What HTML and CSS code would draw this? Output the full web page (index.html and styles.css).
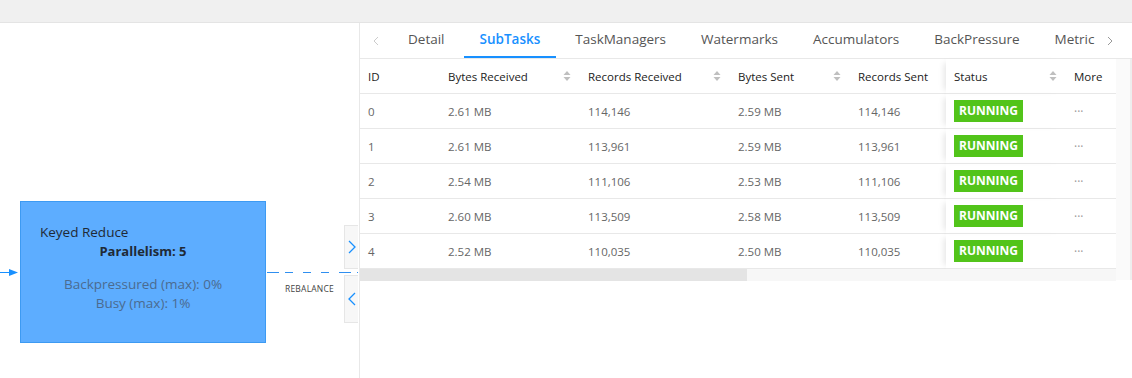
FILE: index.html
```html
<!DOCTYPE html>
<html lang="en">
<head>
    <meta charset="UTF-8">
    <title>Job Vertex - SubTasks</title>
    <link rel="stylesheet" href="styles.css">
</head>
<body>
    <div class="topbar"></div>

    <div class="main">
        <!-- Grafo do job -->
        <div class="graph">
            <svg class="edges" width="359" height="355" viewBox="0 0 359 355">
                <line x1="0" y1="249.5" x2="11" y2="249.5" stroke="#1890ff" stroke-width="1"/>
                <path d="M9 246 L18 249.5 L9 253 Z" fill="#1890ff"/>
                <line x1="267" y1="249.5" x2="358" y2="249.5" stroke="#2f8ff0" stroke-width="1" stroke-dasharray="12 6 8 10 8 10 8 10 12 6"/>
            </svg>

            <div class="node">
                <div class="node-name">Keyed Reduce</div>
                <div class="node-parallelism">Parallelism: 5</div>
                <div class="node-metrics">
                    <div>Backpressured (max): 0%</div>
                    <div>Busy (max): 1%</div>
                </div>
            </div>

            <span class="edge-label">REBALANCE</span>

            <div class="toggle toggle-expand">
                <svg width="8" height="14" viewBox="0 0 8 14"><path d="M1 1 L7 7 L1 13" fill="none" stroke="#1890ff" stroke-width="1.3"/></svg>
            </div>
            <div class="toggle toggle-collapse">
                <svg width="8" height="14" viewBox="0 0 8 14"><path d="M7 1 L1 7 L7 13" fill="none" stroke="#1890ff" stroke-width="1.3"/></svg>
            </div>
        </div>

        <!-- Painel de detalhes -->
        <div class="drawer">
            <div class="tabs-bar">
                <span class="tab-arrow tab-arrow-off">
                    <svg width="6" height="10" viewBox="0 0 6 10"><path d="M5 1 L1 5 L5 9" fill="none" stroke="currentColor" stroke-width="1"/></svg>
                </span>
                <div class="tab-list">
                    <div class="tab">Detail</div>
                    <div class="tab active">SubTasks</div>
                    <div class="tab">TaskManagers</div>
                    <div class="tab">Watermarks</div>
                    <div class="tab">Accumulators</div>
                    <div class="tab">BackPressure</div>
                    <div class="tab">Metric</div>
                </div>
                <span class="tab-arrow tab-arrow-next">
                    <svg width="6" height="10" viewBox="0 0 6 10"><path d="M1 1 L5 5 L1 9" fill="none" stroke="currentColor" stroke-width="1"/></svg>
                </span>
            </div>

            <div class="table-area">
                <div class="table-wrap">
                    <table class="subtasks">
                        <colgroup>
                            <col style="width: 80px">
                            <col style="width: 140px">
                            <col style="width: 150px">
                            <col style="width: 120px">
                            <col style="width: 96px">
                            <col style="width: 120px">
                            <col style="width: 50px">
                        </colgroup>
                        <thead>
                            <tr>
                                <th>ID</th>
                                <th><div class="th-inner">Bytes Received <span class="sorter"></span></div></th>
                                <th><div class="th-inner">Records Received <span class="sorter"></span></div></th>
                                <th><div class="th-inner">Bytes Sent <span class="sorter"></span></div></th>
                                <th>Records Sent</th>
                                <th class="fixed"><div class="th-inner">Status <span class="sorter"></span></div></th>
                                <th>More</th>
                            </tr>
                        </thead>
                        <tbody>
                            <tr>
                                <td>0</td><td>2.61 MB</td><td>114,146</td><td>2.59 MB</td><td>114,146</td>
                                <td class="fixed"><span class="tag">RUNNING</span></td><td class="more">···</td>
                            </tr>
                            <tr>
                                <td>1</td><td>2.61 MB</td><td>113,961</td><td>2.59 MB</td><td>113,961</td>
                                <td class="fixed"><span class="tag">RUNNING</span></td><td class="more">···</td>
                            </tr>
                            <tr>
                                <td>2</td><td>2.54 MB</td><td>111,106</td><td>2.53 MB</td><td>111,106</td>
                                <td class="fixed"><span class="tag">RUNNING</span></td><td class="more">···</td>
                            </tr>
                            <tr>
                                <td>3</td><td>2.60 MB</td><td>113,509</td><td>2.58 MB</td><td>113,509</td>
                                <td class="fixed"><span class="tag">RUNNING</span></td><td class="more">···</td>
                            </tr>
                            <tr>
                                <td>4</td><td>2.52 MB</td><td>110,035</td><td>2.50 MB</td><td>110,035</td>
                                <td class="fixed"><span class="tag">RUNNING</span></td><td class="more">···</td>
                            </tr>
                        </tbody>
                    </table>
                    <div class="hscroll"><div class="hscroll-thumb"></div></div>
                </div>
                <div class="vgutter"></div>
            </div>
        </div>
    </div>

    <script>
        // Ícones de ordenação (iguais em todas as colunas)
        document.querySelectorAll('.sorter').forEach(function (el) {
            el.innerHTML = '<svg width="8" height="12" viewBox="0 0 8 12">' +
                '<path d="M4 1 L7.5 5 L0.5 5 Z" fill="#bfbfbf"/>' +
                '<path d="M4 11 L7.5 7 L0.5 7 Z" fill="#bfbfbf"/></svg>';
        });
    </script>
</body>
</html>
```

FILE: styles.css
```css
body {
    margin: 0;
    font-family: "Open Sans", "Noto Sans", sans-serif;
    background: #fff;
    color: #333;
    overflow: hidden;
}

.topbar {
    height: 22px;
    background: #f0f0f0;
    border-bottom: 1px solid #e4e4e4;
}

.main {
    display: flex;
    height: 355px;
}

/* Grafo */
.graph {
    flex: 0 0 359px;
    position: relative;
    overflow: hidden;
}

.edges {
    position: absolute;
    left: 0;
    top: 0;
}

.node {
    position: absolute;
    left: 20px;
    top: 178px;
    width: 244px;
    height: 118px;
    background: #5dadff;
    border: 1px solid #3d9af2;
    padding-top: 22px;
    font-size: 13.5px;
    line-height: 19px;
}

.node-name {
    padding-left: 19px;
    margin-top: -1px;
    color: #1f2a36;
}

.node-parallelism {
    text-align: center;
    font-weight: bold;
    font-size: 13px;
    color: #1f2a36;
}

.node-metrics {
    margin-top: 14px;
    text-align: center;
    color: #4b6b90;
}

.edge-label {
    position: absolute;
    left: 285px;
    top: 260px;
    font-size: 8.5px;
    letter-spacing: 0.2px;
    color: #444;
}

.toggle {
    position: absolute;
    left: 344px;
    width: 14px;
    background: #f7f7f7;
    border: 1px solid #e6e6e6;
    border-right: none;
    box-sizing: border-box;
    display: flex;
    align-items: center;
    justify-content: center;
}

.toggle-expand {
    top: 202px;
    height: 44px;
}

.toggle-collapse {
    top: 252px;
    height: 48px;
}

/* Painel */
.drawer {
    flex: 1;
    border-left: 1px solid #e8e8e8;
    min-width: 0;
}

.tabs-bar {
    display: flex;
    align-items: center;
    height: 35px;
    border-bottom: 1px solid #e8e8e8;
}

.tab-arrow {
    flex: 0 0 32px;
    display: flex;
    justify-content: center;
    color: #999;
}

.tab-arrow-off {
    color: #ccc;
}

.tab-arrow-next {
    flex: 0 0 20px;
    margin-right: 12px;
}

.tab-list {
    flex: 1;
    display: flex;
    overflow: hidden;
    height: 100%;
}

.tab {
    flex: 0 0 auto;
    padding: 0 16px;
    margin-right: 3px;
    font-size: 13.5px;
    line-height: 33px;
    color: #555;
    border-bottom: 2px solid transparent;
}

.tab:last-child {
    padding-right: 0;
    margin-right: 0;
}

.tab.active {
    color: #1890ff;
    font-weight: 600;
    border-bottom-color: #1890ff;
}

.table-area {
    display: flex;
}

.table-wrap {
    width: 756px;
}

.vgutter {
    flex: 1;
    background: #fafafa;
    border-right: 2px solid #eee;
    height: 221px;
}

.subtasks {
    width: 756px;
    table-layout: fixed;
    border-collapse: separate;
    border-spacing: 0;
    font-size: 11.5px;
}

.subtasks th,
.subtasks td {
    height: 35px;
    box-sizing: border-box;
    padding: 0 8px;
    text-align: left;
    border-bottom: 1px solid #e8e8e8;
    white-space: nowrap;
    overflow: hidden;
}

.subtasks th {
    font-weight: normal;
    color: #222;
}

.subtasks td {
    color: #666;
}

.th-inner {
    display: flex;
    justify-content: space-between;
    align-items: center;
}

.sorter {
    display: flex;
    margin-right: 1px;
}

.subtasks .fixed {
    box-shadow: -6px 0 6px -4px rgba(0, 0, 0, 0.1);
    overflow: visible;
}

.tag {
    display: inline-block;
    background: #52c41a;
    color: #fff;
    font-weight: bold;
    font-size: 12px;
    line-height: 22px;
    padding: 0 5px;
}

.subtasks td.more {
    color: #999;
    font-size: 12px;
}

.hscroll {
    height: 12px;
    background: #f7f7f7;
}

.hscroll-thumb {
    width: 387px;
    height: 100%;
    background: #e4e4e4;
}
```
